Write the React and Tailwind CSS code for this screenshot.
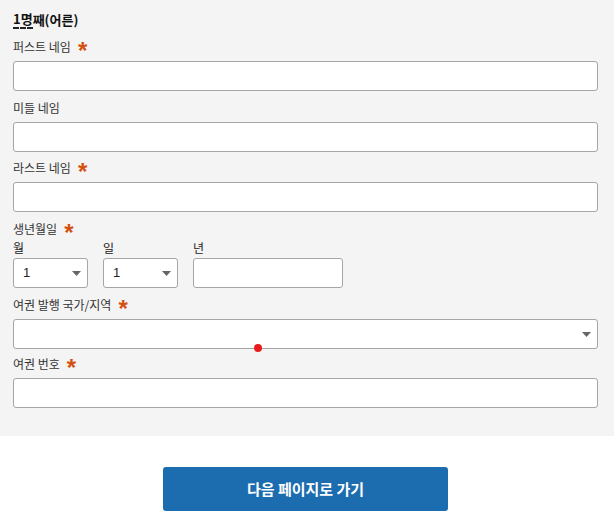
import React from "react";

const font = { fontFamily: '"Noto Sans CJK KR", "Noto Sans", sans-serif' };

function Star() {
  return (
    <span className="ml-[7px] text-[24px] font-bold leading-none text-[#d4500f] relative top-[4px]" style={{ fontFamily: '"Liberation Sans", sans-serif' }}>
      *
    </span>
  );
}

function Label({ children, required }) {
  return (
    <div className="flex h-[22px] items-center text-[12px] text-[#333]">
      <span>{children}</span>
      {required && <Star />}
    </div>
  );
}

function Input({ className = "" }) {
  return <div className={`h-[30px] rounded-[3px] border border-[#a6a6a6] bg-white ${className}`} />;
}

function Caret() {
  return (
    <svg width="9" height="5" viewBox="0 0 9 5" className="shrink-0">
      <path d="M0 0 L9 0 L4.5 5 Z" fill="#666" />
    </svg>
  );
}

function Select({ value, className = "" }) {
  return (
    <div className={`flex h-[30px] items-center justify-between rounded-[3px] border border-[#a6a6a6] bg-white pl-[9px] pr-[6px] text-[13px] text-[#222] ${className}`}>
      <span style={{ fontFamily: '"Liberation Sans", sans-serif' }}>{value}</span>
      <Caret />
    </div>
  );
}

function Field({ label, required, children, className }) {
  return (
    <div className={className}>
      <Label required={required}>{label}</Label>
      <div className="mt-[3px]">{children}</div>
    </div>
  );
}

export default function App() {
  return (
    <div className="w-[614px] bg-white" style={font}>
      <div className="bg-[#f4f4f4] pb-[28px] pl-[13px] pr-[16px] pt-[8px]">
        <div className="flex h-[22px] items-center text-[13px] font-bold text-[#111]">
          <span className="border-b-2 border-dashed border-[#222] leading-[17px]">1명</span>
          <span className="leading-[17px]">째(어른)</span>
        </div>
        <Field label="퍼스트 네임" required className="mt-[6px]">
          <Input />
        </Field>
        <Field label="미들 네임" className="mt-[6px]">
          <Input />
        </Field>
        <Field label="라스트 네임" required className="mt-[5px]">
          <Input />
        </Field>
        <div className="mt-[6px]">
          <Label required>생년월일</Label>
          <div className="flex gap-[15px]">
            <div className="w-[75px]">
              <div className="flex h-[17px] items-end text-[12px] text-[#222]">월</div>
              <Select value="1" className="mt-[1px]" />
            </div>
            <div className="w-[75px]">
              <div className="flex h-[17px] items-end text-[12px] text-[#222]">일</div>
              <Select value="1" className="mt-[1px]" />
            </div>
            <div className="w-[150px]">
              <div className="flex h-[17px] items-end text-[12px] text-[#222]">년</div>
              <Input className="mt-[1px]" />
            </div>
          </div>
        </div>
        <Field label="여권 발행 국가/지역" required className="mt-[6px]">
          <div className="relative">
            <Select value="" />
            <div className="absolute left-[241px] top-[25px] h-[8px] w-[8px] rounded-full bg-[#e81c1c]" />
          </div>
        </Field>
        <Field label="여권 번호" required className="mt-[4px]">
          <Input />
        </Field>
      </div>
      <div className="flex justify-center pb-[8px] pr-[3px] pt-[31px]">
        <button className="h-[44px] w-[285px] rounded-[3px] bg-[#1b6daf] text-[15px] font-bold text-white">
          다음 페이지로 가기
        </button>
      </div>
    </div>
  );
}
